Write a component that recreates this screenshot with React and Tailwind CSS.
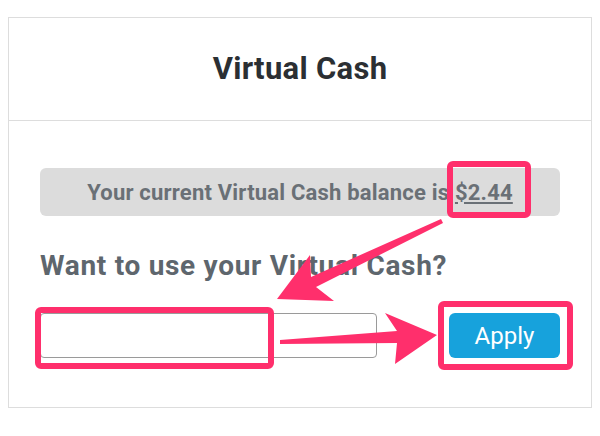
import React from 'react';

const PINK = '#ff2f6c';

function Annotations() {
  return (
    <svg
      className="absolute inset-0 pointer-events-none"
      width="600"
      height="436"
      viewBox="0 0 600 436"
    >
      <rect x="450" y="164" width="78" height="51" rx="3" fill="none" stroke={PINK} strokeWidth="6" />
      <rect x="38" y="310" width="233" height="56" rx="3" fill="none" stroke={PINK} strokeWidth="6" />
      <rect x="441" y="304" width="129" height="63" rx="3" fill="none" stroke={PINK} strokeWidth="6" />
      {/* arrow from balance to input */}
      <polygon
        fill={PINK}
        points="443,223 316,287 334,301 277,299 310,255 311,277 441,219"
      />
      {/* arrow from input to button */}
      <polygon
        fill={PINK}
        points="280,344 397,343 395,364 437,335 385,313 397,331 280,340"
      />
    </svg>
  );
}

export default function App() {
  return (
    <div className="relative w-[600px] h-[436px] bg-white px-2 pt-[17px] font-['Roboto',sans-serif]">
      <div className="w-[584px] border border-[#dddddd]">
        <div className="h-[103px] border-b border-[#dddddd] flex items-center justify-center">
          <h1 className="text-[31px] font-bold text-[#2b2f33] tracking-[0.3px]">Virtual Cash</h1>
        </div>
        <div className="px-[31px] pt-[47px] pb-[49px]">
          <div className="h-[48px] rounded-md bg-[#dcdcdc] flex items-center justify-center text-[22px] font-bold text-[#6a7076] tracking-[0.2px]">
            Your current Virtual Cash balance is&nbsp;<span className="underline underline-offset-2">$2.44</span>
          </div>
          <h2 className="mt-[33px] text-[28px] leading-[34px] font-bold text-[#5e666d] tracking-[0.7px]">
            Want to use your Virtual Cash?
          </h2>
          <div className="mt-[30px] flex items-center justify-between">
            <input
              type="text"
              className="w-[337px] h-[45px] border border-[#9a9a9a] rounded-[4px] bg-white outline-none px-2"
            />
            <button
              type="button"
              className="w-[111px] h-[45px] rounded-md bg-[#17a2dc] text-white text-[24px] font-normal"
            >
              Apply
            </button>
          </div>
        </div>
      </div>
      <Annotations />
    </div>
  );
}
